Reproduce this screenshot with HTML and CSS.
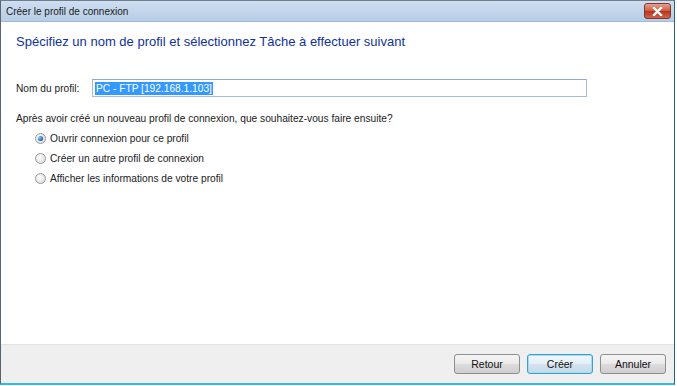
FILE: index.html
```html
<!doctype html>
<html>
	<head>
		<meta charset="utf-8">
		<title>Créer le profil de connexion</title>
		<link rel="stylesheet" href="styles.css">
	</head>
	<body>
		<div class="window">
			<div class="titlebar">
				<span class="title">Créer le profil de connexion</span>
				<span class="close">
					<svg width="11" height="9" viewBox="0 0 11 9"><path d="M2 1 L9 8 M9 1 L2 8" stroke="#fff" stroke-width="2.4" stroke-linecap="square"/></svg>
				</span>
			</div>

			<div class="content">
				<h1 class="heading">Spécifiez un nom de profil et sélectionnez Tâche à effectuer suivant</h1>

				<div class="field">
					<label class="field__label">Nom du profil:</label>
					<div class="field__input"><span class="selected">PC - FTP [192.168.1.103]</span></div>
				</div>

				<p class="question">Après avoir créé un nouveau profil de connexion, que souhaitez-vous faire ensuite?</p>

				<div class="options">
					<div class="option"><span class="radio radio--checked"></span>Ouvrir connexion pour ce profil</div>
					<div class="option"><span class="radio"></span>Créer un autre profil de connexion</div>
					<div class="option"><span class="radio"></span>Afficher les informations de votre profil</div>
				</div>
			</div>

			<div class="footer">
				<a class="button">Retour</a>
				<a class="button button--default">Créer</a>
				<a class="button">Annuler</a>
			</div>
		</div>
	</body>
</html>
```

FILE: styles.css
```css
body{
	margin: 0;
	background-color: #ffffff;
	font-family: "Liberation Sans", Arial, sans-serif;
}

.window {
	box-sizing: border-box;
	width: 675px;
	height: 385px;
	display: flex;
	flex-direction: column;
	border-left: 1px solid #5a6470;
	border-right: 1px solid #2f5f78;
	border-top: 1px solid #6f7f90;
	border-bottom: 2px solid #35b7ea;
	background-color: #ffffff;
}

/* title bar */
.titlebar {
	height: 20px;
	display: flex;
	align-items: center;
	justify-content: space-between;
	padding: 0 3px 0 5px;
	background: linear-gradient(#cfdef0, #b7cde6);
	border-bottom: 1px solid #a3b9d2;
}
.title {
	font-size: 10px;
	color: #1b1b1b;
}
.close {
	width: 25px;
	height: 14px;
	display: flex;
	align-items: center;
	justify-content: center;
	border: 1px solid #7b3a30;
	border-radius: 3px;
	background: linear-gradient(#e6a08f, #cf5a42 50%, #b8321c 51%, #d0644a);
}

/* main area */
.content {
	flex: 1;
	padding: 0 15px;
}
.heading {
	margin: 12px 0 0 0;
	font-size: 13px;
	line-height: 15px;
	font-weight: normal;
	color: #10339a;
}
.field {
	display: flex;
	align-items: center;
	margin-top: 30px;
}
.field__label {
	width: 76px;
	font-size: 10.2px;
	color: #222;
}
.field__input {
	box-sizing: border-box;
	width: 495px;
	height: 18px;
	display: flex;
	align-items: center;
	padding: 0 2px;
	border: 1px solid #a7bdd6;
	border-top-color: #8fa9c8;
	font-size: 10.2px;
}
.selected {
	background-color: #3399ff;
	color: #ffffff;
	padding: 1px 1px;
}
.question {
	margin: 16px 0 0 0;
	font-size: 10.2px;
	color: #222;
}
.options {
	display: flex;
	flex-direction: column;
	gap: 7px;
	margin-top: 8px;
	padding-left: 19px;
}
.option {
	display: flex;
	align-items: center;
	gap: 4px;
	font-size: 10.2px;
	color: #222;
	height: 13px;
}
.radio {
	box-sizing: border-box;
	width: 11px;
	height: 11px;
	border-radius: 50%;
	border: 1px solid #9a9a9a;
	background: radial-gradient(circle at 40% 40%, #ffffff, #d4d4d4);
	position: relative;
}
.radio--checked::after {
	content: "";
	position: absolute;
	left: 2px;
	top: 2px;
	width: 5px;
	height: 5px;
	border-radius: 50%;
	background: radial-gradient(circle at 35% 35%, #8fd0ff, #1558a8 70%);
}

/* button bar */
.footer {
	height: 38px;
	display: flex;
	justify-content: flex-end;
	align-items: center;
	gap: 7px;
	padding: 0 8px 0 0;
	background-color: #efefef;
	border-top: 1px solid #e2e2e2;
}
.button {
	box-sizing: border-box;
	width: 66px;
	height: 20px;
	display: flex;
	align-items: center;
	justify-content: center;
	font-size: 10.5px;
	color: #111;
	border: 1px solid #8e8e8e;
	border-radius: 3px;
	background: linear-gradient(#f6f6f6, #e9e9e9 50%, #dcdcdc 51%, #cfcfcf);
}
.button--default {
	border-color: #3c9fd4;
	box-shadow: inset 0 0 0 1px #9fdcf6;
	background: linear-gradient(#f2f8fb, #e3eef5 50%, #d3e3ee 51%, #c5dae8);
}
```
